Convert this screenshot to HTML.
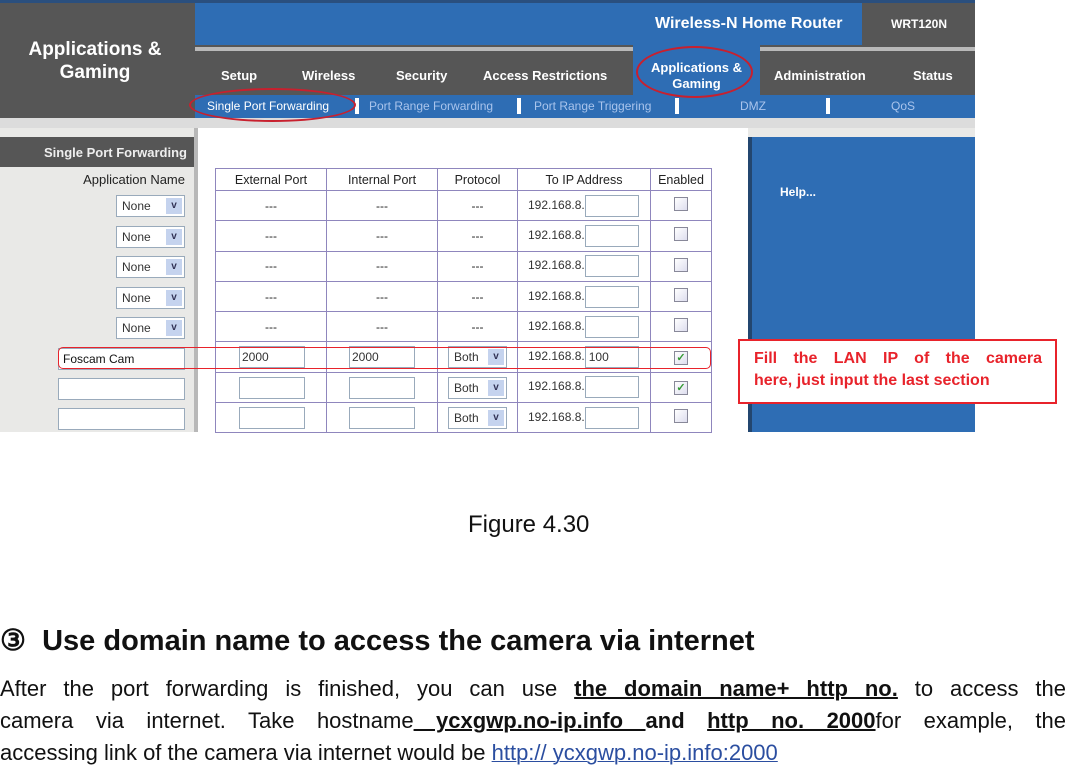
<!DOCTYPE html>
<html><head><meta charset="utf-8"><style>
*{margin:0;padding:0;box-sizing:border-box}
body{width:1066px;height:767px;background:#fff;position:relative;overflow:hidden;font-family:"Liberation Sans",Arial,sans-serif}
.a{position:absolute}
.nav{color:#fff;font-weight:bold;font-size:13px}
.sub{color:#a9c4ec;font-size:12px}
table{position:absolute;left:215px;top:168px;border-collapse:collapse;font-size:12px;color:#222}
td{border:1px solid #8f86bd;text-align:center;height:30.3px;padding:0;position:relative}
tr.h td{height:22px;font-size:12.5px}
.ip{color:#333;font-size:12px;text-align:left;padding-left:10px}
.box{display:inline-block;border:1px solid #9ab;background:#fff;vertical-align:middle}
.cb{display:inline-block;width:14px;height:14px;border:1px solid #889;background:linear-gradient(135deg,#fff,#dde)}
.sel{position:absolute;border:1px solid #9ab;background:#fff;font-size:12px;color:#333;height:22px;line-height:20px;padding-left:5px;text-align:left}
.sel i{position:absolute;right:2px;top:2px;width:16px;height:16px;background:#c5d3ee;color:#335;font-style:normal;font-size:10px;line-height:16px;text-align:center;font-weight:bold}
p.t{position:absolute;left:0;width:1066px;font-size:22px;color:#111;text-align:justify;text-align-last:justify;line-height:24px}
u{text-decoration-thickness:2px}
</style></head><body>
<div class="a" style="left:0;top:0;width:975px;height:432px;background:#e9e9e7"></div>
<div class="a" style="left:0;top:0;width:195px;height:118px;background:#565656"></div>
<div class="a" style="left:0;top:0;width:975px;height:3px;background:#2a4f7e"></div>
<div class="a nav" style="left:0;top:38px;width:190px;text-align:center;font-size:19px;line-height:23px">Applications &amp;<br>Gaming</div>
<div class="a" style="left:195px;top:3px;width:667px;height:42px;background:#2e6db4"></div>
<div class="a nav" style="left:655px;top:15px;font-size:16px">Wireless-N Home Router</div>
<div class="a" style="left:862px;top:3px;width:113px;height:42px;background:#565656"></div>
<div class="a nav" style="left:891px;top:17px;font-size:12px">WRT120N</div>
<div class="a" style="left:195px;top:45px;width:780px;height:50px;background:#565656"></div>
<div class="a" style="left:195px;top:47px;width:780px;height:4px;background:#b9b9b9"></div>
<div class="a" style="left:633px;top:45px;width:127px;height:50px;background:#2e6db4"></div>
<div class="a nav" style="left:221px;top:68px">Setup</div>
<div class="a nav" style="left:302px;top:68px">Wireless</div>
<div class="a nav" style="left:396px;top:68px">Security</div>
<div class="a nav" style="left:483px;top:68px">Access Restrictions</div>
<div class="a nav" style="left:633px;top:60px;width:127px;text-align:center;line-height:16px">Applications &amp;<br>Gaming</div>
<div class="a nav" style="left:774px;top:68px">Administration</div>
<div class="a nav" style="left:913px;top:68px">Status</div>
<div class="a" style="left:195px;top:95px;width:780px;height:23px;background:#2e6db4"></div>
<div class="a sub" style="left:207px;top:99px;color:#fff">Single Port Forwarding</div>
<div class="a sub" style="left:369px;top:99px">Port Range Forwarding</div>
<div class="a sub" style="left:534px;top:99px">Port Range Triggering</div>
<div class="a sub" style="left:740px;top:99px">DMZ</div>
<div class="a sub" style="left:891px;top:99px">QoS</div>
<div class="a" style="left:355px;top:98px;width:4px;height:16px;background:#fff"></div>
<div class="a" style="left:517px;top:98px;width:4px;height:16px;background:#fff"></div>
<div class="a" style="left:675px;top:98px;width:4px;height:16px;background:#fff"></div>
<div class="a" style="left:826px;top:98px;width:4px;height:16px;background:#fff"></div>
<div class="a" style="left:0;top:118px;width:975px;height:10px;background:#dcdcdc"></div>
<div class="a" style="left:0;top:137px;width:195px;height:30px;background:#565656"></div>
<div class="a nav" style="left:0;top:145px;width:187px;text-align:right;font-size:13px;color:#eee">Single Port Forwarding</div>
<div class="a" style="left:0;top:172px;width:185px;text-align:right;font-size:13px;color:#222">Application Name</div>
<div class="a" style="left:194px;top:128px;width:4px;height:304px;background:#b8b8b8"></div>
<div class="a" style="left:198px;top:128px;width:550px;height:304px;background:#fff"></div>
<div class="a" style="left:748px;top:137px;width:227px;height:295px;background:#2e6db4;border-left:4px solid #23466f"></div>
<div class="a nav" style="left:780px;top:185px;font-size:12px">Help...</div>
<div class="sel" style="left:116px;top:195px;width:69px">None<i>v</i></div>
<div class="sel" style="left:116px;top:226px;width:69px">None<i>v</i></div>
<div class="sel" style="left:116px;top:256px;width:69px">None<i>v</i></div>
<div class="sel" style="left:116px;top:287px;width:69px">None<i>v</i></div>
<div class="sel" style="left:116px;top:317px;width:69px">None<i>v</i></div>
<div class="sel" style="left:58px;top:348px;width:127px;color:#111;padding-left:4px">Foscam Cam</div>
<div class="sel" style="left:58px;top:378px;width:127px"></div>
<div class="sel" style="left:58px;top:408px;width:127px"></div>
<table>
<tr class="h"><td style="width:111px">External Port</td><td style="width:111px">Internal Port</td><td style="width:80px">Protocol</td><td style="width:133px">To IP Address</td><td style="width:61px">Enabled</td></tr>
<tr><td>---</td><td>---</td><td>---</td><td class="ip">192.168.8.<span class="box" style="width:54px;height:22px"></span></td><td><span class="cb"></span></td></tr>
<tr><td>---</td><td>---</td><td>---</td><td class="ip">192.168.8.<span class="box" style="width:54px;height:22px"></span></td><td><span class="cb"></span></td></tr>
<tr><td>---</td><td>---</td><td>---</td><td class="ip">192.168.8.<span class="box" style="width:54px;height:22px"></span></td><td><span class="cb"></span></td></tr>
<tr><td>---</td><td>---</td><td>---</td><td class="ip">192.168.8.<span class="box" style="width:54px;height:22px"></span></td><td><span class="cb"></span></td></tr>
<tr><td>---</td><td>---</td><td>---</td><td class="ip">192.168.8.<span class="box" style="width:54px;height:22px"></span></td><td><span class="cb"></span></td></tr>
<tr><td><div class="sel" style="left:23px;top:4px;width:66px;padding-left:2px">2000</div></td><td><div class="sel" style="left:22px;top:4px;width:66px;padding-left:2px">2000</div></td><td><div class="sel" style="left:10px;top:4px;width:59px">Both<i>v</i></div></td><td class="ip">192.168.8.<span class="box" style="width:54px;height:22px;font-size:12px;line-height:20px;padding-left:3px">100</span></td><td><span class="cb" style="color:#393;font-size:11px;line-height:12px;font-weight:bold">✓</span></td></tr>
<tr><td><div class="sel" style="left:23px;top:4px;width:66px"></div></td><td><div class="sel" style="left:22px;top:4px;width:66px"></div></td><td><div class="sel" style="left:10px;top:4px;width:59px">Both<i>v</i></div></td><td class="ip">192.168.8.<span class="box" style="width:54px;height:22px"></span></td><td><span class="cb" style="color:#393;font-size:11px;line-height:12px;font-weight:bold">✓</span></td></tr>
<tr><td style="height:29px"><div class="sel" style="left:23px;top:4px;width:66px"></div></td><td><div class="sel" style="left:22px;top:4px;width:66px"></div></td><td><div class="sel" style="left:10px;top:4px;width:59px">Both<i>v</i></div></td><td class="ip">192.168.8.<span class="box" style="width:54px;height:22px"></span></td><td><span class="cb"></span></td></tr>
</table>
<div class="a" style="left:58px;top:347px;width:653px;height:22px;border:1.5px solid #e8232b;border-radius:5px"></div>
<div class="a" style="left:189px;top:88px;width:167px;height:34px;border:2.5px solid #c8202e;border-radius:50%"></div>
<div class="a" style="left:636px;top:46px;width:117px;height:52px;border:2.5px solid #c8202e;border-radius:50%"></div>
<div class="a" style="left:738px;top:339px;width:319px;height:65px;background:#fff;border:2px solid #e8232b"></div>
<div class="a" style="left:754px;top:348px;width:288px;color:#e8232b;font-weight:bold;font-size:16px;line-height:22px;text-align:justify;text-align-last:left"><div style="text-align-last:justify">Fill the LAN IP of the camera</div>here, just input the last section</div>
<div class="a" style="left:468px;top:511px;font-size:24px;color:#111">Figure 4.30</div>
<div class="a" style="left:0;top:623px;font-size:29px;font-weight:bold;color:#111">③ &nbsp;Use domain name to access the camera via internet</div>
<p class="t" style="top:677px">After the port forwarding is finished, you can use <b><u>the domain name+ http no.</u></b> to access the</p>
<p class="t" style="top:709px">camera via internet. Take hostname<b><u> ycxgwp.no-ip.info </u> and <u> http no. 2000</u></b>for example, the</p>
<p class="t" style="top:741px;text-align-last:left">accessing link of the camera via internet would be <u style="color:#2b4ea0;text-decoration-thickness:1px">http:// ycxgwp.no-ip.info:2000</u></p>
</body></html>
